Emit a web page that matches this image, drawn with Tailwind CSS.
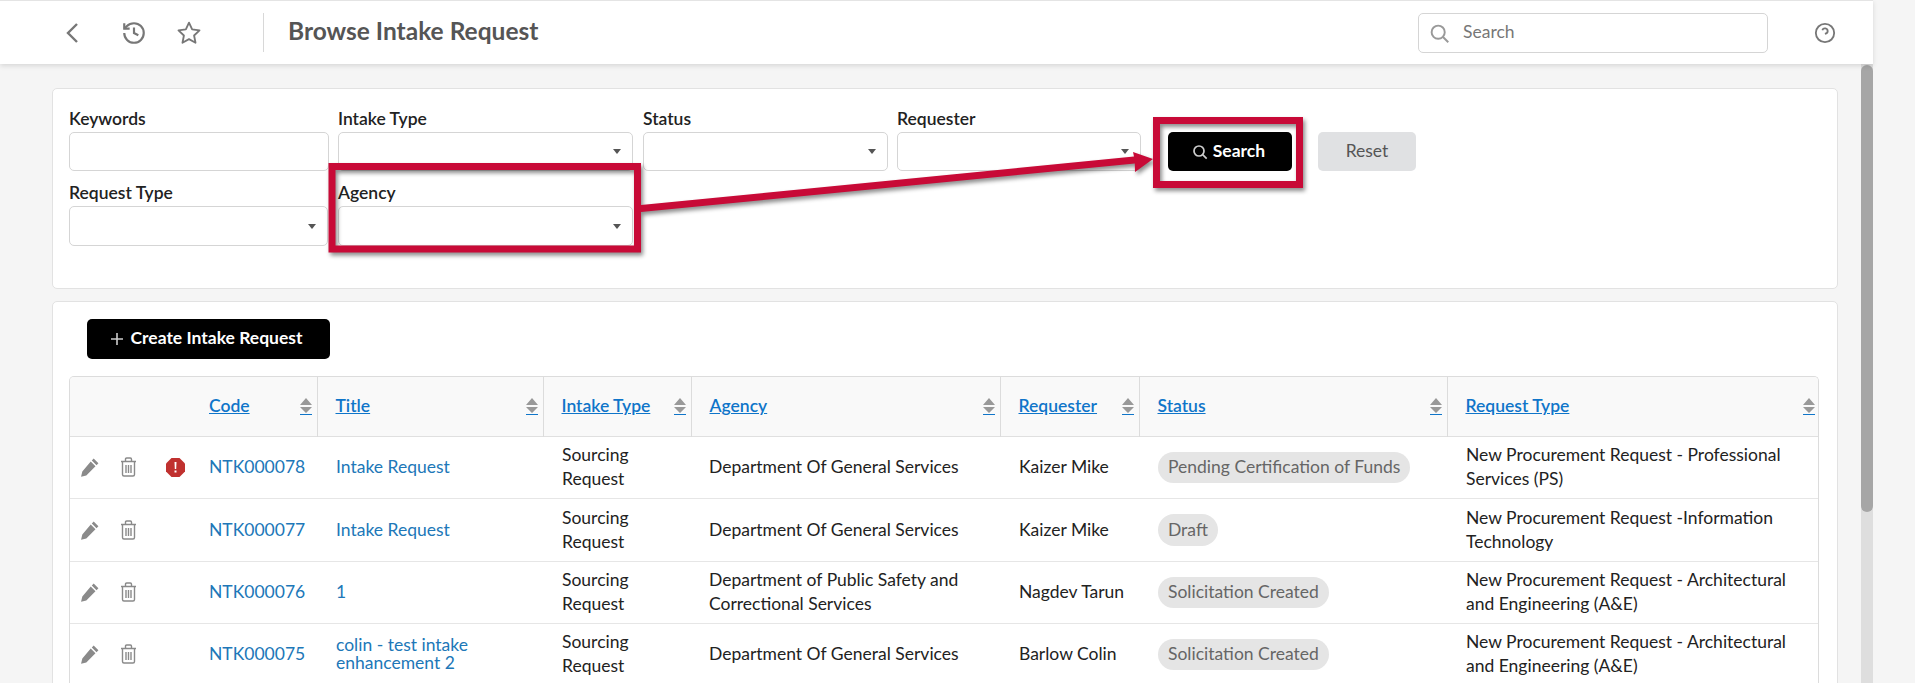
<!doctype html>
<html lang="en">
<head>
<meta charset="utf-8">
<title>Browse Intake Request</title>
<script src="https://cdn.jsdelivr.net/npm/@tailwindcss/browser@4"></script>
</head>
<body class="m-0 overflow-hidden bg-[#f5f5f5] font-['Lato',sans-serif] text-[17.500px] text-[#222]">
<div class="relative h-[683px] w-[1915px] overflow-hidden">
  <div class="flex h-full w-[1873px] flex-col">
    <header class="z-10 flex h-[64px] shrink-0 items-center border-t border-[#e4e4e4] bg-white shadow-[0_2px_5px_rgba(0,0,0,0.12)]">
      <svg class="ml-[64px] h-[22px] w-[16px]" viewBox="0 0 16 22" fill="none" stroke="#777" stroke-width="2.4"><path d="M13 2 4 11l9 9"/></svg>
      <svg class="ml-[41px] h-[26px] w-[26px]" viewBox="0 0 24 24" fill="none" stroke="#777" stroke-width="2"><path d="M3 12a9 9 0 1 0 9-9 9.75 9.75 0 0 0-6.74 2.74L3 8"/><path d="M3 3v5h5"/><path d="M12 7v5l4 2"/></svg>
      <svg class="ml-[29px] h-[26px] w-[26px]" viewBox="0 0 24 24" fill="none" stroke="#777" stroke-width="1.7" stroke-linejoin="round"><path d="M12 2.5l2.9 6.2 6.8.9-5 4.7 1.3 6.7-6-3.3-6 3.3 1.3-6.7-5-4.700 6.800-.9z"/></svg>
      <div class="ml-[61px] h-[39px] w-px bg-[#d8d8d8]"></div>
      <h1 class="mb-[2px] ml-[24px] text-[24.500px] font-bold text-[#555]">Browse Intake Request</h1>
      <div class="relative ml-auto flex h-[40px] w-[350px] items-center rounded-[5px] border border-[#d5d5d5] bg-white pl-[44px] text-[#777]">
        <svg class="absolute left-[10px] top-[9px] h-[21px] w-[21px]" viewBox="0 0 24 24" fill="none" stroke="#999" stroke-width="2.2"><circle cx="10.5" cy="10.5" r="7.5"/><path d="m16 16 6 6"/></svg>
        Search
      </div>
      <svg class="ml-[46px] mr-[37px] h-[22px] w-[22px]" viewBox="0 0 24 24" fill="none" stroke="#777" stroke-width="2"><circle cx="12" cy="12" r="10"/><path d="M9.09 9a3 3 0 0 1 5.83 1c0 2-3 3-3 3"/><path d="M12 17h.01"/></svg>
    </header>
    <div class="flex min-h-0 flex-1">
      <main class="min-w-0 flex-1 pl-[52px] pr-[23px] pt-[24px]">
        <section class="h-[201px] rounded-[5px] border border-[#e2e2e2] bg-white pl-[16px] pt-[17px]">
          <div class="flex">
            <label class="block w-[260px] font-semibold"><span class="block h-[26px] leading-[25px]">Keywords</span><input class="block h-[39px] w-full rounded-[5px] border border-[#d5d5d5] bg-white"></label>
            <label class="relative ml-[9px] block w-[295px] font-semibold"><span class="block h-[26px] leading-[25px]">Intake Type</span><select class="block h-[39px] w-full appearance-none rounded-[5px] border border-[#d5d5d5] bg-white"></select><svg class="absolute bottom-[17px] right-[12px] h-[5px] w-[8px]" viewBox="0 0 8 5" fill="#555"><path d="M0 0h8L4 5z"/></svg></label>
            <label class="relative ml-[10px] block w-[245px] font-semibold"><span class="block h-[26px] leading-[25px]">Status</span><select class="block h-[39px] w-full appearance-none rounded-[5px] border border-[#d5d5d5] bg-white"></select><svg class="absolute bottom-[17px] right-[12px] h-[5px] w-[8px]" viewBox="0 0 8 5" fill="#555"><path d="M0 0h8L4 5z"/></svg></label>
            <label class="relative ml-[9px] block w-[244px] font-semibold"><span class="block h-[26px] leading-[25px]">Requester</span><select class="block h-[39px] w-full appearance-none rounded-[5px] border border-[#d5d5d5] bg-white"></select><svg class="absolute bottom-[17px] right-[12px] h-[5px] w-[8px]" viewBox="0 0 8 5" fill="#555"><path d="M0 0h8L4 5z"/></svg></label>
            <button class="ml-[27px] mt-[26px] flex h-[39px] w-[124px] items-center justify-center gap-[5px] rounded-[5px] bg-black pr-[3px] font-bold text-white">
              <svg class="h-[16px] w-[16px]" viewBox="0 0 24 24" fill="none" stroke="#ccc" stroke-width="2.6"><circle cx="10.5" cy="10.5" r="7.5"/><path d="m16 16 6 6"/></svg>Search
            </button>
            <button class="ml-[26px] mt-[26px] h-[39px] w-[98px] rounded-[5px] bg-[#e0e1e3] text-[#555]">Reset</button>
          </div>
          <div class="mt-[9px] flex">
            <label class="relative block w-[259px] font-semibold"><span class="block h-[26px] leading-[25px]">Request Type</span><select class="block h-[40px] w-full appearance-none rounded-[5px] border border-[#d5d5d5] bg-white"></select><svg class="absolute bottom-[17px] right-[12px] h-[5px] w-[8px]" viewBox="0 0 8 5" fill="#555"><path d="M0 0h8L4 5z"/></svg></label>
            <label class="relative ml-[10px] block w-[295px] font-semibold"><span class="block h-[26px] leading-[25px]">Agency</span><select class="block h-[40px] w-full appearance-none rounded-[5px] border border-[#d5d5d5] bg-white"></select><svg class="absolute bottom-[17px] right-[12px] h-[5px] w-[8px]" viewBox="0 0 8 5" fill="#555"><path d="M0 0h8L4 5z"/></svg></label>
          </div>
        </section>
        <section class="mt-[12px] h-[500px] rounded-[5px] border border-[#e2e2e2] bg-white px-[16px] pt-[17px]">
          <button class="ml-[18px] flex h-[40px] w-[243px] items-center justify-center gap-[6px] rounded-[5px] bg-black pb-[2px] pr-[4px] font-bold text-white">
            <svg class="mt-[2px] h-[14px] w-[14px]" viewBox="0 0 14 14" stroke="#ccc" stroke-width="1.6"><path d="M7 1v12M1 7h12"/></svg>Create Intake Request
          </button>
          <div class="mt-[17px] w-[1750px] overflow-hidden rounded-t-[5px] border-x border-t border-[#dcdcdc]">
            <table class="w-[1750px] table-fixed border-collapse">
              <colgroup><col class="w-[40px]"><col class="w-[40px]"><col class="w-[40px]"><col class="w-[127px]"><col class="w-[226px]"><col class="w-[148px]"><col class="w-[309px]"><col class="w-[139px]"><col class="w-[308px]"><col class="w-[373px]"></colgroup>
              <thead>
                <tr class="h-[59px] border-b border-[#e0e0e0] bg-[#f9f9f9] text-left">
                  <th colspan="3"></th>
                  <th class="pl-[19px] pr-[5px] font-semibold"><div class="flex items-center justify-between"><a class="text-[#0f75c9] underline" href="#">Code</a><svg class="h-[17px] w-[12px]" viewBox="0 0 12 17"><path fill="#999" d="M6 0l6 7H0zM0 9h12l-6 6z"/><path stroke="#0f75c9" d="M0 16.5h12"/></svg></div></th>
                  <th class="border-l border-[#dcdcdc] pl-[18px] pr-[5px] font-semibold"><div class="flex items-center justify-between"><a class="text-[#0f75c9] underline" href="#">Title</a><svg class="h-[17px] w-[12px]" viewBox="0 0 12 17"><path fill="#999" d="M6 0l6 7H0zM0 9h12l-6 6z"/><path stroke="#0f75c9" d="M0 16.5h12"/></svg></div></th>
                  <th class="border-l border-[#dcdcdc] pl-[18px] pr-[5px] font-semibold"><div class="flex items-center justify-between"><a class="text-[#0f75c9] underline" href="#">Intake Type</a><svg class="h-[17px] w-[12px]" viewBox="0 0 12 17"><path fill="#999" d="M6 0l6 7H0zM0 9h12l-6 6z"/><path stroke="#0f75c9" d="M0 16.5h12"/></svg></div></th>
                  <th class="border-l border-[#dcdcdc] pl-[18px] pr-[5px] font-semibold"><div class="flex items-center justify-between"><a class="text-[#0f75c9] underline" href="#">Agency</a><svg class="h-[17px] w-[12px]" viewBox="0 0 12 17"><path fill="#999" d="M6 0l6 7H0zM0 9h12l-6 6z"/><path stroke="#0f75c9" d="M0 16.5h12"/></svg></div></th>
                  <th class="border-l border-[#dcdcdc] pl-[18px] pr-[5px] font-semibold"><div class="flex items-center justify-between"><a class="text-[#0f75c9] underline" href="#">Requester</a><svg class="h-[17px] w-[12px]" viewBox="0 0 12 17"><path fill="#999" d="M6 0l6 7H0zM0 9h12l-6 6z"/><path stroke="#0f75c9" d="M0 16.5h12"/></svg></div></th>
                  <th class="border-l border-[#dcdcdc] pl-[18px] pr-[5px] font-semibold"><div class="flex items-center justify-between"><a class="text-[#0f75c9] underline" href="#">Status</a><svg class="h-[17px] w-[12px]" viewBox="0 0 12 17"><path fill="#999" d="M6 0l6 7H0zM0 9h12l-6 6z"/><path stroke="#0f75c9" d="M0 16.5h12"/></svg></div></th>
                  <th class="border-l border-[#dcdcdc] pl-[18px] pr-[5px] font-semibold"><div class="flex items-center justify-between"><a class="text-[#0f75c9] underline" href="#">Request Type</a><svg class="h-[17px] w-[12px]" viewBox="0 0 12 17"><path fill="#999" d="M6 0l6 7H0zM0 9h12l-6 6z"/><path stroke="#0f75c9" d="M0 16.5h12"/></svg></div></th>
                </tr>
              </thead>
              <tbody class="leading-[24px]">
                <tr class="h-[62px] border-b border-[#e6e6e6]">
                  <td class="pl-[10px]"><svg class="h-[20px] w-[20px]" viewBox="0 0 19 19" fill="#8a8a8a"><path d="M13 1.5l4.5 4.5-1.8 1.8-4.5-4.5zM10.2 4.3l4.5 4.5-8.7 8.7-5 1.2 1.2-5z"/></svg></td>
                  <td class="pl-[10px]"><svg class="h-[20px] w-[17px]" viewBox="0 0 17 20" fill="none" stroke="#8a8a8a" stroke-width="1.4"><path d="M1 4.5h15M5.5 4.5V2.2q0-1.2 1.2-1.2h3.6q1.2 0 1.2 1.2v2.3M2.5 4.5v13q0 1.5 1.5 1.5h9q1.5 0 1.5-1.5v-13M6 8v8M8.500 8v8M11 8v8"/></svg></td>
                  <td class="pl-[16px]"><svg class="h-[19px] w-[19px]" viewBox="0 0 19 19"><path fill="#c0312f" d="M5.5 0h8L19 5.500v8L13.500 19h-8L0 13.500v-8z"/><path fill="#fff" d="M8.500 4h2l-.3 7H8.800zM8.500 12.500h2v2h-2z"/></svg></td>
                  <td class="pl-[19px]"><a class="text-[#2077b8]" href="#">NTK000078</a></td>
                  <td class="pl-[19px] leading-[18px]"><a class="text-[#2077b8]" href="#">Intake Request</a></td>
                  <td class="pl-[19px]">Sourcing Request</td>
                  <td class="pl-[18px]">Department Of General Services</td>
                  <td class="pl-[19px]">Kaizer Mike</td>
                  <td class="pl-[19px]"><span class="inline-block h-[31px] rounded-full bg-[#e5e5e5] px-[10px] leading-[30px] text-[#666]">Pending Certification of Funds</span></td>
                  <td class="pl-[19px] pr-[20px]">New Procurement Request - Professional Services (PS)</td>
                </tr>
                <tr class="h-[63px] border-b border-[#e6e6e6]">
                  <td class="pl-[10px]"><svg class="h-[20px] w-[20px]" viewBox="0 0 19 19" fill="#8a8a8a"><path d="M13 1.5l4.5 4.5-1.8 1.8-4.5-4.5zM10.2 4.3l4.5 4.5-8.7 8.7-5 1.2 1.2-5z"/></svg></td>
                  <td class="pl-[10px]"><svg class="h-[20px] w-[17px]" viewBox="0 0 17 20" fill="none" stroke="#8a8a8a" stroke-width="1.4"><path d="M1 4.5h15M5.5 4.5V2.2q0-1.2 1.2-1.2h3.6q1.2 0 1.2 1.2v2.3M2.5 4.5v13q0 1.5 1.5 1.5h9q1.5 0 1.5-1.5v-13M6 8v8M8.500 8v8M11 8v8"/></svg></td>
                  <td></td>
                  <td class="pl-[19px]"><a class="text-[#2077b8]" href="#">NTK000077</a></td>
                  <td class="pl-[19px] leading-[18px]"><a class="text-[#2077b8]" href="#">Intake Request</a></td>
                  <td class="pl-[19px]">Sourcing Request</td>
                  <td class="pl-[18px]">Department Of General Services</td>
                  <td class="pl-[19px]">Kaizer Mike</td>
                  <td class="pl-[19px]"><span class="inline-block h-[32px] rounded-full bg-[#e5e5e5] px-[10px] leading-[31px] text-[#666]">Draft</span></td>
                  <td class="pl-[19px] pr-[20px]">New Procurement Request -Information Technology</td>
                </tr>
                <tr class="h-[62px] border-b border-[#e6e6e6]">
                  <td class="pl-[10px]"><svg class="h-[20px] w-[20px]" viewBox="0 0 19 19" fill="#8a8a8a"><path d="M13 1.5l4.5 4.5-1.8 1.8-4.5-4.5zM10.2 4.3l4.5 4.5-8.7 8.7-5 1.2 1.2-5z"/></svg></td>
                  <td class="pl-[10px]"><svg class="h-[20px] w-[17px]" viewBox="0 0 17 20" fill="none" stroke="#8a8a8a" stroke-width="1.4"><path d="M1 4.5h15M5.5 4.5V2.2q0-1.2 1.2-1.2h3.6q1.2 0 1.2 1.2v2.3M2.5 4.5v13q0 1.5 1.5 1.5h9q1.5 0 1.5-1.5v-13M6 8v8M8.500 8v8M11 8v8"/></svg></td>
                  <td></td>
                  <td class="pl-[19px]"><a class="text-[#2077b8]" href="#">NTK000076</a></td>
                  <td class="pl-[19px] leading-[18px]"><a class="text-[#2077b8]" href="#">1</a></td>
                  <td class="pl-[19px]">Sourcing Request</td>
                  <td class="pl-[18px]">Department of Public Safety and Correctional Services</td>
                  <td class="pl-[19px]">Nagdev Tarun</td>
                  <td class="pl-[19px]"><span class="inline-block h-[31px] rounded-full bg-[#e5e5e5] px-[10px] leading-[30px] text-[#666]">Solicitation Created</span></td>
                  <td class="pl-[19px] pr-[20px]">New Procurement Request - Architectural and Engineering (A&amp;E)</td>
                </tr>
                <tr class="h-[62px] border-b border-[#e6e6e6]">
                  <td class="pl-[10px]"><svg class="h-[20px] w-[20px]" viewBox="0 0 19 19" fill="#8a8a8a"><path d="M13 1.5l4.5 4.5-1.8 1.8-4.5-4.5zM10.2 4.3l4.5 4.5-8.7 8.7-5 1.2 1.2-5z"/></svg></td>
                  <td class="pl-[10px]"><svg class="h-[20px] w-[17px]" viewBox="0 0 17 20" fill="none" stroke="#8a8a8a" stroke-width="1.4"><path d="M1 4.5h15M5.5 4.5V2.2q0-1.2 1.2-1.2h3.6q1.2 0 1.2 1.2v2.3M2.5 4.5v13q0 1.5 1.5 1.5h9q1.5 0 1.5-1.5v-13M6 8v8M8.500 8v8M11 8v8"/></svg></td>
                  <td></td>
                  <td class="pl-[19px]"><a class="text-[#2077b8]" href="#">NTK000075</a></td>
                  <td class="pl-[19px] leading-[18px]"><a class="text-[#2077b8]" href="#">colin - test intake enhancement 2</a></td>
                  <td class="pl-[19px]">Sourcing Request</td>
                  <td class="pl-[18px]">Department Of General Services</td>
                  <td class="pl-[19px]">Barlow Colin</td>
                  <td class="pl-[19px]"><span class="inline-block h-[31px] rounded-full bg-[#e5e5e5] px-[10px] leading-[30px] text-[#666]">Solicitation Created</span></td>
                  <td class="pl-[19px] pr-[20px]">New Procurement Request - Architectural and Engineering (A&amp;E)</td>
                </tr>
              </tbody>
            </table>
          </div>
        </section>
      </main>
      <div class="relative w-[12px] shrink-0 bg-[#dedede]">
        <div class="absolute inset-x-0 top-[1px] h-[447px] rounded-full bg-[#a6a6a6]"></div>
      </div>
    </div>
  </div>
  <svg class="pointer-events-none absolute left-0 top-0 z-20 h-[683px] w-[1915px] drop-shadow-[2px_3px_2px_rgba(0,0,0,0.45)]" viewBox="0 0 1915 683" fill="none">
    <rect x="332" y="166.500" width="305.500" height="82.500" stroke="#c80a37" stroke-width="7"/>
    <rect x="1156.500" y="120.500" width="143" height="64" stroke="#c80a37" stroke-width="7"/>
    <path fill="#c80a37" d="M641 205 1134 156.500 1133 152 1153 159 1135 172 1134.800 163.500 641 212z"/>
  </svg>
</div>
</body>
</html>
